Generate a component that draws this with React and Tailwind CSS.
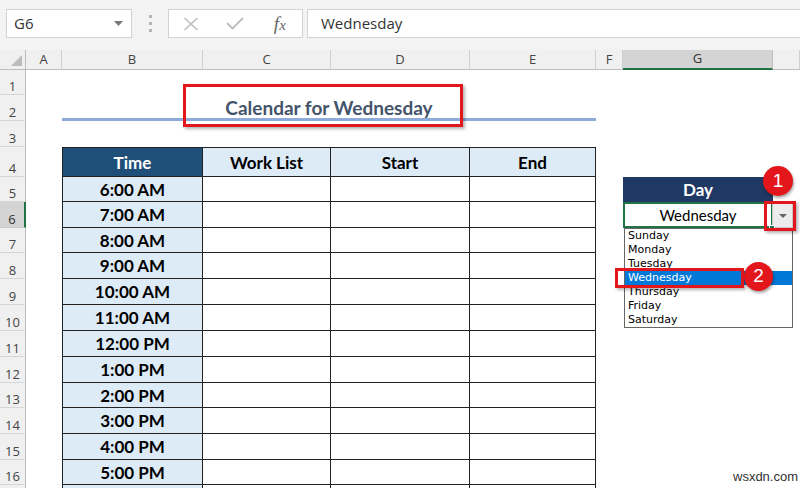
import React from "react";

const times = ["6:00 AM", "7:00 AM", "8:00 AM", "9:00 AM", "10:00 AM", "11:00 AM", "12:00 PM", "1:00 PM", "2:00 PM", "3:00 PM", "4:00 PM", "5:00 PM", ""];
const letters = ["A", "B", "C", "D", "E", "F", "G", ""];
const days = ["Sunday", "Monday", "Tuesday", "Wednesday", "Thursday", "Friday", "Saturday"];

const ui = { fontFamily: '"Open Sans", "Noto Sans", sans-serif' };
const cellFont = { fontFamily: 'Lato, "Open Sans", sans-serif' };

function RowHeader({ n }) {
  const active = n === 6;
  return (
    <div
      style={ui}
      className={
        active
          ? "flex items-end justify-center border-b border-b-[#c8c8c8] border-r-2 border-r-[#217346] bg-[#d4d4d4] pb-[1px] text-[13px] leading-none text-[#333]"
          : "flex items-end justify-center border-b border-b-[#d6d6d6] border-r border-r-[#bdbdbd] bg-[#f0f0f0] pb-[1px] text-[13px] leading-none text-[#444]"
      }
    >
      {n < 17 ? n : ""}
    </div>
  );
}

function TableCell({ r, c }) {
  let cls = "flex items-center justify-center border-r border-b border-[#222] text-[17px] font-bold leading-none ";
  if (c === 0) cls += "border-l ";
  if (r === 4) cls += "border-t ";
  if (r === 4 && c === 0) cls += "bg-[#1f4e79] text-white";
  else if (r === 4 || c === 0) cls += "bg-[#ddebf7] text-black";
  else cls += "bg-white";
  let text = "";
  if (r === 4) text = ["Time", "Work List", "Start", "End"][c];
  else if (c === 0) text = times[r - 5];
  return (
    <div style={cellFont} className={cls}>
      {text}
    </div>
  );
}

export default function App() {
  const cells = [];
  cells.push(
    <div key="corner" className="relative border-r border-b border-[#bdbdbd] bg-[#f0f0f0]">
      <svg className="absolute right-[3px] bottom-[3px]" width="11" height="11" viewBox="0 0 11 11">
        <polygon points="11,0 11,11 0,11" fill="#bcbcbc" />
      </svg>
    </div>
  );
  letters.forEach((l, i) => {
    const active = l === "G";
    cells.push(
      <div
        key={"h" + i}
        style={ui}
        className={
          active
            ? "flex items-center justify-center border-r border-r-[#bdbdbd] border-b-2 border-b-[#217346] bg-[#d4d4d4] text-[13px] text-[#333]"
            : "flex items-center justify-center border-r border-r-[#cfcfcf] border-b border-b-[#bdbdbd] bg-[#f0f0f0] text-[13px] text-[#444]"
        }
      >
        {l}
      </div>
    );
  });

  for (let r = 1; r <= 17; r++) {
    cells.push(<RowHeader key={"rh" + r} n={r} />);
    cells.push(<div key={"a" + r} className="bg-white" />);
    if (r === 2) {
      cells.push(
        <div
          key="title"
          style={cellFont}
          className="col-span-4 flex items-center justify-center border-b-[3px] border-[#8eaadb] bg-white pt-[4px] text-[19px] font-bold text-[#44546a]"
        >
          Calendar for Wednesday
        </div>
      );
    } else if (r >= 4) {
      for (let c = 0; c < 4; c++) cells.push(<TableCell key={"t" + r + c} r={r} c={c} />);
    } else {
      for (let c = 0; c < 4; c++) cells.push(<div key={"e" + r + c} className="bg-white" />);
    }
    cells.push(<div key={"f" + r} className="bg-white" />);
    if (r === 5) {
      cells.push(
        <div key="day" style={cellFont} className="flex items-center justify-center bg-[#203864] text-[17px] font-bold text-white">
          Day
        </div>
      );
    } else if (r === 6) {
      cells.push(
        <div key="sel" style={cellFont} className="flex items-center justify-center border-2 border-[#217346] bg-white text-[15px] text-black">
          Wednesday
        </div>
      );
    } else {
      cells.push(<div key={"g" + r} className="bg-white" />);
    }
    cells.push(<div key={"hh" + r} className="bg-white" />);
  }

  return (
    <div className="relative h-[488px] w-[800px] overflow-hidden bg-white">
      {/* formula bar */}
      <div className="flex h-[50px] items-start bg-[#f3f3f3] pt-[9px] pl-[6px]">
        <div className="flex h-[29px] w-[126px] items-center justify-between border border-[#d2d2d2] bg-white pl-[7px] pr-[8px]">
          <span style={ui} className="text-[15px] text-[#333]">G6</span>
          <svg width="9" height="5" viewBox="0 0 9 5">
            <polygon points="0,0 9,0 4.5,5" fill="#777" />
          </svg>
        </div>
        <div className="flex h-[29px] w-[36px] flex-col items-center justify-center gap-[4px]">
          <div className="h-[3px] w-[3px] bg-[#b5b5b5]" />
          <div className="h-[3px] w-[3px] bg-[#b5b5b5]" />
          <div className="h-[3px] w-[3px] bg-[#b5b5b5]" />
        </div>
        <div className="flex h-[29px] w-[135px] items-center border border-[#d2d2d2] bg-white">
          <div className="flex w-[45px] items-center justify-center">
            <svg width="16" height="14" viewBox="0 0 16 14">
              <path d="M1.5 1 L14.5 13 M14.5 1 L1.5 13" stroke="#bdbdbd" strokeWidth="1.6" fill="none" />
            </svg>
          </div>
          <div className="flex w-[45px] items-center justify-center">
            <svg width="18" height="13" viewBox="0 0 18 13">
              <path d="M1 6 L6.5 11.5 L17 1" stroke="#bdbdbd" strokeWidth="1.8" fill="none" />
            </svg>
          </div>
          <div className="flex w-[45px] items-center justify-center">
            <span
              style={{ fontFamily: '"Liberation Serif", serif' }}
              className="text-[19px] italic leading-none text-[#666]"
            >
              f<span className="text-[15px]">x</span>
            </span>
          </div>
        </div>
        <div className="ml-[4px] flex h-[29px] flex-1 items-center border border-r-0 border-[#d2d2d2] bg-white pl-[13px]">
          <span style={ui} className="text-[15px] text-[#333]">Wednesday</span>
        </div>
      </div>

      {/* sheet grid */}
      <div className="grid grid-cols-[26px_36px_141px_128px_139px_126px_27px_150px_27px] grid-rows-[20px_25px_26px_26px_30px_25px_26px_25px_26px_26px_26px_26px_26px_25px_26px_26px_25px_26px]">
        {cells}
      </div>

      {/* data validation dropdown button */}
      <div className="absolute left-[772px] top-[203px] flex h-[25px] w-[21px] items-center justify-center border border-[#c8c8c8] bg-[#ececec]">
        <svg width="8" height="4" viewBox="0 0 8 4">
          <polygon points="0,0 8,0 4,4" fill="#666" />
        </svg>
      </div>
      <div className="absolute left-[769px] top-[225px] h-[6px] w-[6px] border border-white bg-[#217346]" />

      {/* dropdown list */}
      <div
        style={{ fontFamily: '"DejaVu Sans", Tahoma, sans-serif' }}
        className="absolute left-[624px] top-[228px] flex w-[169px] flex-col border border-[#666] bg-white"
      >
        {days.map((d) => (
          <div
            key={d}
            className={
              d === "Wednesday"
                ? "h-[14px] bg-[#0078d7] pl-[3px] text-[11px] leading-[14px] text-white"
                : "h-[14px] pl-[3px] text-[11px] leading-[14px] text-black"
            }
          >
            {d}
          </div>
        ))}
      </div>

      {/* annotations */}
      <div className="absolute left-[183px] top-[84px] h-[43px] w-[280px] border-[3px] border-[#e3161c] shadow-[2px_2px_3px_rgba(0,0,0,0.3)]" />
      <div className="absolute left-[764px] top-[201px] h-[30px] w-[32px] border-[3px] border-[#e3161c] shadow-[2px_2px_3px_rgba(0,0,0,0.3)]" />
      <div className="absolute left-[615px] top-[268px] h-[20px] w-[129px] border-[3px] border-[#e3161c] shadow-[2px_2px_3px_rgba(0,0,0,0.3)]" />
      <div
        style={{ fontFamily: '"Liberation Sans", Arial, sans-serif' }}
        className="absolute left-[763px] top-[166px] flex h-[30px] w-[30px] items-center justify-center rounded-full bg-[#e3161c] text-[19px] text-white shadow-[1px_2px_3px_rgba(0,0,0,0.35)]"
      >
        1
      </div>
      <div
        style={{ fontFamily: '"Liberation Sans", Arial, sans-serif' }}
        className="absolute left-[744px] top-[262px] flex h-[29px] w-[29px] items-center justify-center rounded-full bg-[#e3161c] text-[19px] text-white shadow-[1px_2px_3px_rgba(0,0,0,0.35)]"
      >
        2
      </div>

      {/* watermark */}
      <div
        style={{ fontFamily: '"Liberation Sans", Arial, sans-serif' }}
        className="absolute left-[733px] top-[467px] text-[13px] text-[#333]"
      >
        wsxdn.com
      </div>
    </div>
  );
}
